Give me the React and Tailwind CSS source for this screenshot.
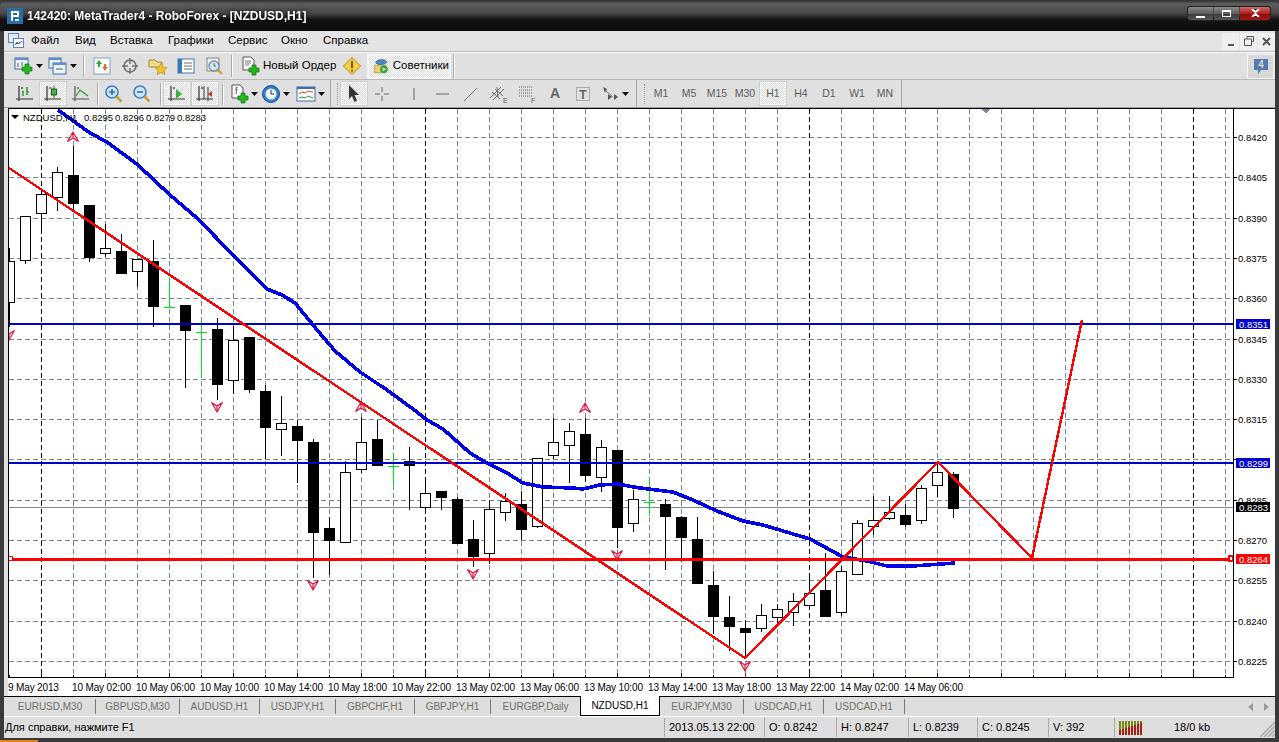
import React from "react";

const FONT = "'Liberation Sans', Arial, sans-serif";

// x = 9 + 16 * index; [wickTop, wickBottom, bodyTop, bodyBottom, kind]
const CANDLES = [
  [248, 327, 261, 302, "w"], [216, 264, 216, 260, "w"], [194, 233, 194, 213, "w"], [167, 211, 172, 197, "w"],
  [146, 212, 175, 203, "b"], [205, 262, 205, 257, "b"], [224, 257, 248, 253, "w"], [234, 273, 251, 273, "b"],
  [259, 287, 259, 271, "w"], [240, 327, 261, 306, "b"], [277, 307, 307, 307, "g"], [305, 388, 305, 330, "b"],
  [320, 378, 332, 332, "g"], [318, 400, 329, 384, "b"], [326, 394, 340, 380, "w"], [337, 393, 337, 389, "b"],
  [385, 459, 391, 427, "b"], [396, 456, 423, 429, "w"], [420, 483, 426, 440, "b"], [439, 578, 442, 532, "b"],
  [517, 575, 528, 540, "b"], [461, 542, 472, 542, "w"], [417, 473, 442, 469, "w"], [420, 465, 439, 465, "b"],
  [453, 486, 466, 466, "g"], [447, 510, 461, 465, "b"], [480, 510, 493, 507, "w"], [491, 510, 491, 497, "b"],
  [497, 543, 499, 543, "b"], [520, 567, 539, 556, "b"], [500, 564, 509, 553, "w"], [493, 521, 501, 512, "w"],
  [491, 540, 504, 529, "b"], [458, 528, 458, 526, "w"], [418, 459, 442, 455, "w"], [423, 483, 431, 445, "w"],
  [418, 482, 434, 475, "b"], [440, 492, 447, 477, "w"], [450, 548, 450, 527, "b"], [490, 532, 499, 523, "w"],
  [477, 516, 502, 502, "g"], [499, 570, 504, 516, "b"], [516, 562, 517, 537, "b"], [517, 583, 539, 583, "b"],
  [571, 634, 585, 616, "b"], [596, 651, 617, 626, "b"], [620, 658, 628, 632, "b"], [604, 632, 615, 628, "w"],
  [604, 627, 609, 617, "w"], [593, 626, 601, 612, "w"], [577, 610, 593, 605, "w"], [553, 616, 590, 616, "b"],
  [566, 616, 571, 612, "w"], [520, 575, 523, 574, "w"], [496, 535, 520, 526, "w"], [496, 520, 512, 518, "w"],
  [504, 527, 515, 524, "b"], [485, 524, 488, 520, "w"], [463, 497, 472, 485, "w"], [472, 518, 474, 508, "b"],
];

const MA = "58,110 90,133 107,142 138,165 170,195 197,218 233,255 267,289 282,295 295,303 318,331 335,351 360,372 387,390 417,412 427,420 443,429 470,453 487,463 507,473 523,483 543,487 573,488 583,489 600,485 617,484 640,488 673,492 693,500 717,511 743,521 763,525 810,539 843,557 867,561 887,566 913,566 955,563";

const PRICES = ["0.8420", "0.8405", "0.8390", "0.8375", "0.8360", "0.8345", "0.8330", "0.8315", null, "0.8285", "0.8270", "0.8255", "0.8240", "0.8225"];
const priceY = (i) => Math.round(137 + i * 40.31);

const TIMES = ["10 May 02:00", "10 May 06:00", "10 May 10:00", "10 May 14:00", "10 May 18:00", "10 May 22:00", "13 May 02:00", "13 May 06:00", "13 May 10:00", "13 May 14:00", "13 May 18:00", "13 May 22:00", "14 May 02:00", "14 May 06:00"];

const UP_MARKS = [[73, 137], [361, 407], [585, 408]];
const DOWN_MARKS = [[9, 335], [217, 407], [313, 585], [473, 574], [617, 555], [745, 666]];

const TABS = [
  ["EURUSD,M30", 91], ["GBPUSD,M30", 84], ["AUDUSD,H1", 80], ["USDJPY,H1", 76], ["GBPCHF,H1", 79], ["GBPJPY,H1", 76], ["EURGBP,Daily", 89],
];

const Sep = ({ className = "ml-[2px] mr-[1px]" }) => (
  <div className={`w-[2px] h-[22px] border-l border-[#a8a8a8] border-r-white border-r shrink-0 ${className}`} />
);

const Btn = ({ w = 28, active, className = "", children }) => (
  <div
    style={{ width: w }}
    className={`h-[25px] shrink-0 flex items-center justify-center ${className} ${
      active ? "border-2 border-[#f4f4f4] outline outline-1 outline-[#cfcfcf] -outline-offset-1 bg-[repeating-conic-gradient(#ffffff_0_25%,#d8d8d8_0_50%)] bg-[length:2px_2px]" : ""
    }`}
  >
    {children}
  </div>
);

const Caret = () => <svg width="7" height="4" viewBox="0 0 7 4" className="ml-[2px]"><path d="M0 0h7L3.5 4z" fill="#111" /></svg>;

const Ico = ({ children, size = 20 }) => (
  <svg width={size} height={size} viewBox="0 0 20 20" fill="none">{children}</svg>
);

const Plus = ({ x = 10, y = 10 }) => (
  <path transform={`translate(${x} ${y})`} d="M3 0h4v3h3v4H7v3H3V7H0V3h3z" fill="#25b51f" stroke="#0f6f14" strokeWidth=".7" />
);

const Win = ({ x = 1, y = 3, w = 14, h = 11 }) => (
  <>
    <rect x={x} y={y} width={w} height={h} fill="#eef4fb" stroke="#3f6fa8" />
    <rect x={x} y={y} width={w} height="2" fill="#5f8fc6" />
  </>
);

const Axes = ({ c = "#333" }) => <path d="M4 2v15M1 15h17M7 3v2" stroke={c} strokeWidth="1.2" />;

const Lens = ({ sign }) => (
  <Ico>
    <circle cx="8" cy="8" r="6" fill="#cfe6f8" stroke="#3a7fc0" strokeWidth="1.6" />
    <path d="M12.5 12.5l5 5" stroke="#c9a23a" strokeWidth="2.6" />
    <path d={sign === "+" ? "M5 8h6M8 5v6" : "M5 8h6"} stroke="#2a6fb0" strokeWidth="1.6" />
  </Ico>
);

const IconText = ({ t, sub }) => (
  <Ico>
    <text x="10" y="14" textAnchor="middle" fontFamily={FONT} fontWeight="700" fontSize="14" fill="#666">{t}</text>
    {sub}
  </Ico>
);

const TitleBar = () => (
  <div className="h-[31px] shrink-0 flex items-center rounded-t-[6px] bg-[linear-gradient(180deg,#2e2e2e_0,#5c5c5c_12%,#4a4a4a_40%,#333333_52%,#141414_62%,#0d0d0d_100%)]">
    <svg width="16" height="16" viewBox="0 0 16 16" className="ml-[7px] mr-[4px]">
      <rect width="16" height="16" fill="#2b6ca8" />
      <path d="M4 3h8v6H6v4H4zM6 5v2h4V5z" fill="#fff" />
      <path d="M8 11h4v2H8z" fill="#cfe3f5" />
    </svg>
    <span className="text-[12px] font-bold text-white drop-shadow-[0_0_2px_#000]" style={{ fontFamily: FONT }}>
      142420: MetaTrader4 - RoboForex - [NZDUSD,H1]
    </span>
    <div className="ml-auto mr-[9px] mb-[5px] flex h-[13px] gap-px outline outline-1 outline-[#222] rounded-[2px]">
      <div className="w-[25px] flex items-end justify-center pb-[2px] bg-[linear-gradient(180deg,#8a8a8a,#5e5e5e_50%,#3c3c3c_55%,#555)] rounded-l-[2px]">
        <div className="w-[9px] h-[2px] bg-white" />
      </div>
      <div className="w-[25px] flex items-center justify-center bg-[linear-gradient(180deg,#8a8a8a,#5e5e5e_50%,#3c3c3c_55%,#555)]">
        <div className="w-[9px] h-[7px] border border-t-2 border-white" />
      </div>
      <div className="w-[30px] flex items-center justify-center bg-[linear-gradient(180deg,#d06a6a,#b02020_50%,#8c0c0c_55%,#a81818)] rounded-r-[2px]">
        <svg width="9" height="8" viewBox="0 0 9 8"><path d="M1 0l3.5 3L8 0M1 8l3.5-3L8 8" stroke="#fff" strokeWidth="2" /></svg>
      </div>
    </div>
  </div>
);

const MENU = [["Файл", 44], ["Вид", 35], ["Вставка", 58], ["Графики", 60], ["Сервис", 53], ["Окно", 42], ["Справка", 60]];

const MenuBar = () => (
  <div className="h-[21px] shrink-0 flex items-center bg-[#e4e4e4] border-b border-[#bdbdbd]">
    <div className="w-[27px] pl-[4px] flex items-center">
      <svg width="16" height="16" viewBox="0 0 16 16">
        <rect x=".5" y=".5" width="10" height="9" fill="#dfeafa" stroke="#5b7fc0" />
        <rect x="5.5" y="5.5" width="10" height="9" fill="#fff" stroke="#5b7fc0" />
        <path d="M7 12l2-3 2 2 3-3" stroke="#4a7ac0" />
      </svg>
    </div>
    {MENU.map(([label, w]) => (
      <span key={label} style={{ width: w }} className="text-[11.5px] text-black shrink-0">{label}</span>
    ))}
    <div className="ml-auto flex gap-px items-center">
      <div className="w-[17px] h-[17px] bg-[#efefef] flex items-end justify-center pb-[4px]"><div className="w-[6px] h-[2px] bg-[#555]" /></div>
      <div className="w-[17px] h-[17px] bg-[#efefef] flex items-center justify-center">
        <svg width="10" height="10" viewBox="0 0 10 10" fill="none"><path d="M3 2.5V.5h6.5v5H7.5M.5 3h7v6.5h-7z" stroke="#555" /></svg>
      </div>
      <div className="w-[17px] h-[17px] bg-[#efefef] flex items-center justify-center">
        <svg width="9" height="9" viewBox="0 0 9 9"><path d="M1 1l7 7M8 1L1 8" stroke="#555" strokeWidth="2" /></svg>
      </div>
    </div>
  </div>
);

const ToolbarTop = () => (
  <div className="h-[28px] shrink-0 flex items-center bg-[#e0e0e0] border-t border-white border-b border-b-[#b8b8b8] pl-[8px]">
    <Btn w={32}>
      <Ico><Win x={1} y={2} w={13} h={11} /><path d="M4 7v4M8 6v4" stroke="#555" /><Plus x={8} y={8} /></Ico><Caret />
    </Btn>
    <Btn w={35} className="ml-[1px]">
      <Ico><Win x={1} y={2} w={12} h={10} /><Win x={5} y={7} w={13} h={11} /><path d="M8 13h7" stroke="#555" /></Ico><Caret />
    </Btn>
    <Sep className="mx-[3px]" />
    <Btn>
      <Ico>
        <rect x="2" y="2" width="16" height="16" fill="#fff" stroke="#7aa0c8" />
        <path d="M7 4l3 4H8v3H6V8H4z" fill="#2fa52f" />
        <path d="M13 15l-3-4h2V8h2v3h2z" fill="#e0702a" />
      </Ico>
    </Btn>
    <Btn>
      <Ico>
        <circle cx="10" cy="10" r="6" stroke="#6e6e6e" strokeWidth="1.6" />
        <path d="M10 2v6M10 12v6M2 10h6M12 10h6" stroke="#6e6e6e" strokeWidth="1.4" />
      </Ico>
    </Btn>
    <Btn>
      <Ico>
        <path d="M1 4h6l2 2h5v5H1z" fill="#f0d98a" stroke="#a88a30" />
        <path d="M13 7l2 4 4 .5-3 3 .8 4-3.8-2-3.8 2 .8-4-3-3 4-.5z" fill="#f2c230" stroke="#b88a10" strokeWidth=".7" />
      </Ico>
    </Btn>
    <Btn>
      <Ico>
        <rect x="2" y="3" width="16" height="14" fill="#fff" stroke="#3c78b8" />
        <rect x="2" y="3" width="4" height="14" fill="#3c78b8" />
        <path d="M8 7h8M8 10h8M8 13h8" stroke="#6a6a6a" />
      </Ico>
    </Btn>
    <Btn>
      <Ico>
        <rect x="3" y="2" width="12" height="13" fill="#eee" stroke="#888" />
        <circle cx="10" cy="10" r="5" fill="#d6e8f7" stroke="#7a8ea8" strokeWidth="1.4" />
        <path d="M10 7v3h2" stroke="#7a5a5a" />
        <path d="M14 14l4 4" stroke="#c9a23a" strokeWidth="2.4" />
      </Ico>
    </Btn>
    <Sep className="mx-[3px]" />
    <div className="flex items-center h-[25px] w-[102px] shrink-0 pl-[4px]">
      <Ico>
        <path d="M3 1h8l3 3v10H3z" fill="#fff" stroke="#555" />
        <path d="M5 5h6M5 7h6M5 9h4" stroke="#777" />
        <Plus x={9} y={9} />
      </Ico>
      <span className="ml-[3px] text-[11.5px] text-black whitespace-nowrap">Новый Ордер</span>
    </div>
    <Btn>
      <Ico>
        <path d="M10 1.5l8.5 8.5-8.5 8.5L1.5 10z" fill="#f6cf45" stroke="#b08a18" strokeLinejoin="round" />
        <path d="M10 5v7M10 13.5v2" stroke="#6b4a08" strokeWidth="1.8" />
      </Ico>
    </Btn>
    <div className="ml-px h-[25px] w-[84px] shrink-0 flex items-center pl-[4px] border-2 border-[#f4f4f4] bg-[repeating-conic-gradient(#ffffff_0_25%,#dcdcdc_0_50%)] bg-[length:2px_2px]">
      <Ico>
        <path d="M2 9h13v9H2z" fill="#edd27a" stroke="#b39a3a" />
        <path d="M3 6c1-4 10-5 12-2l2 1-2 2c-4 2-9 2-12-1z" fill="#4a86c8" stroke="#2b5d95" strokeWidth=".7" />
        <circle cx="13" cy="14" r="4.5" fill="#2fa52f" />
        <path d="M11.5 11.8l4 2.2-4 2.2z" fill="#fff" />
      </Ico>
      <span className="ml-[3px] text-[11.5px] text-black">Советники</span>
    </div>
    <div className="w-[2px] h-[26px] ml-[2px] border-l border-[#b0b0b0] border-r border-r-white" />
    <div className="ml-auto mr-px w-[27px] h-[25px] border border-[#f4f4f4] bg-[#d8d8d8] flex items-center justify-center">
      <svg width="16" height="17" viewBox="0 0 16 17">
        <path d="M1 1h14v11H8l-3 4v-4H1z" fill="#5878b0" />
        <text x="8" y="10" textAnchor="middle" fontFamily={FONT} fontSize="10" fill="#fff">4</text>
      </svg>
    </div>
  </div>
);

const ToolbarBottom = () => (
  <div className="h-[28px] shrink-0 flex bg-[#e0e0e0] border-b border-[#a0a0a0]">
    <div className="w-[327px] flex items-center pl-[7px] border-r border-[#a8a8a8]">
      <Btn>
        <Ico><Axes /><path d="M8 7v5M12 3v8" stroke="#1c9a1c" strokeWidth="1.4" /><path d="M7 7h1M12 8h2" stroke="#1c9a1c" /></Ico>
      </Btn>
      <Btn active>
        <Ico><Axes /><path d="M11 2v12" stroke="#1c7a1c" /><rect x="8.5" y="5" width="5" height="6" fill="#35c035" stroke="#111" strokeWidth=".7" /></Ico>
      </Btn>
      <Btn>
        <Ico><Axes c="#555" /><path d="M5 12l4-6 4 3 4 3" stroke="#2f9a2f" strokeWidth="1.2" /></Ico>
      </Btn>
      <Sep />
      <Btn><Lens sign="+" /></Btn>
      <Btn><Lens sign="-" /></Btn>
      <Sep className="ml-[4px] mr-[1px]" />
      <Btn active>
        <Ico><Axes /><path d="M9 5l6 5-6 5z" fill="#37b437" /></Ico>
      </Btn>
      <Btn active>
        <Ico><Axes /><path d="M9 2v13" stroke="#333" /><path d="M13 10l4-3v6z" fill="#d03018" /><path d="M13 3v14" stroke="#333" /></Ico>
      </Btn>
      <Sep className="ml-[3px] mr-[3px]" />
      <Btn w={32}>
        <Ico>
          <path d="M3 1h8l3 3v10H3z" fill="#fff" stroke="#555" />
          <text x="6" y="10" fontFamily={FONT} fontSize="9" fill="#333">f</text>
          <Plus x={9} y={9} />
        </Ico>
        <Caret />
      </Btn>
      <Btn w={31} className="ml-px">
        <Ico>
          <circle cx="10" cy="10" r="8.5" fill="#2f7fd0" stroke="#1b4f8a" />
          <circle cx="10" cy="10" r="5.5" fill="#f4f8fc" />
          <path d="M10 6v4h3" stroke="#333" />
        </Ico>
        <Caret />
      </Btn>
      <Btn w={35} className="ml-[2px]">
        <Ico>
          <rect x="1" y="3" width="18" height="14" fill="#fff" stroke="#3c6ea8" />
          <rect x="1" y="3" width="18" height="2" fill="#3c6ea8" />
          <path d="M3 10l3-2 3 1 3-2 5 1" stroke="#d04a2a" />
          <path d="M3 14l3-1 3 1 3-2 5 2" stroke="#2f9a2f" />
        </Ico>
        <Caret />
      </Btn>
    </div>
    <div className="w-[303px] ml-[3px] flex items-center pl-[3px] border-r border-[#a8a8a8]">
      <div className="w-[2px] h-[22px] border-l border-dotted border-[#999] mr-[1px]" />
      <Btn active>
        <svg width="12" height="17" viewBox="0 0 12 17"><path d="M1 0l10 10H6.5L9 15.5 6.5 17 4 11l-3 3z" fill="#333" /></svg>
      </Btn>
      <Btn>
        <Ico><path d="M10 3v5M10 12v5M3 10h5M12 10h5" stroke="#666" /></Ico>
      </Btn>
      <Btn className="ml-[4px]"><Ico><path d="M10 4v12" stroke="#666" /></Ico></Btn>
      <Btn className="ml-px"><Ico><path d="M3 10h13" stroke="#666" /></Ico></Btn>
      <Btn><Ico><path d="M3 17L16 4" stroke="#777" /></Ico></Btn>
      <Btn>
        <Ico>
          <path d="M1 14L12 3M4 16L15 5M3 8l8 7M6 5l8 7M8 3l1 10" stroke="#666" strokeWidth=".9" />
          <text x="14" y="19" fontFamily={FONT} fontSize="7" fill="#555">E</text>
        </Ico>
      </Btn>
      <Btn>
        <Ico>
          <path d="M2 3h14M2 6h14M2 9h14M2 12h14" stroke="#666" strokeDasharray="1 1" />
          <text x="14" y="19" fontFamily={FONT} fontSize="7" fill="#555">F</text>
        </Ico>
      </Btn>
      <Btn><IconText t="A" /></Btn>
      <Btn>
        <Ico>
          <rect x="3.5" y="3.5" width="13" height="13" stroke="#777" strokeDasharray="1 1" />
          <text x="10" y="15" textAnchor="middle" fontFamily={FONT} fontWeight="700" fontSize="12" fill="#666">T</text>
        </Ico>
      </Btn>
      <Btn w={34}>
        <Ico>
          <path d="M3 3l4 2-2 4zM8 10l4 3-4 3zM14 10l4 3-4 3z" fill="#555" />
          <path d="M6 7l7 6" stroke="#777" />
        </Ico>
        <Caret />
      </Btn>
    </div>
    <div className="w-[262px] ml-[3px] flex items-center pl-[4px] border-r border-[#a8a8a8]">
      <div className="w-[3px] h-[20px] border-l border-dotted border-[#999]" />
      {["M1", "M5", "M15", "M30", "H1", "H4", "D1", "W1", "MN"].map((p) => (
        <Btn key={p} active={p === "H1"}>
          <span className="text-[10.5px] text-[#5c5c5c]">{p}</span>
        </Btn>
      ))}
    </div>
  </div>
);

const Chart = () => (
  <div className="h-[588px] shrink-0 pl-[4px] bg-[#dedede]">
    <svg width="1267" height="588" viewBox="8 108 1267 588" className="block bg-white" fontFamily={FONT}>
      <g shapeRendering="crispEdges">
        {/* grid */}
        {PRICES.map((_, i) => (
          <line key={i} x1="9" x2="1233" y1={priceY(i) + 0.5} y2={priceY(i) + 0.5} stroke="#778899" strokeDasharray="5 3" />
        ))}
        {Array.from({ length: 38 }, (_, i) => 41 + i * 32).map((x) => (
          <line
            key={x}
            x1={x + 0.5}
            x2={x + 0.5}
            y1="109"
            y2="677"
            stroke={[41, 425, 809, 1193].includes(x) ? "#000" : "#778899"}
            strokeDasharray="5 3"
          />
        ))}
        <line x1="9" x2="1233" y1="507.5" y2="507.5" stroke="#778899" />

        {/* candles */}
        {CANDLES.map(([wt, wb, bt, bb, kind], i) => {
          const x = 9 + i * 16;
          if (kind === "g") {
            return (
              <g key={i} stroke="#00e020">
                <line x1={x + 0.5} x2={x + 0.5} y1={wt} y2={wb} />
                <line x1={x - 5} x2={x + 6} y1={bt + 0.5} y2={bt + 0.5} />
              </g>
            );
          }
          return (
            <g key={i}>
              <line x1={x + 0.5} x2={x + 0.5} y1={wt} y2={wb} stroke="#000" />
              <rect x={x - 4.5} y={bt + 0.5} width="10" height={bb - bt} fill={kind === "b" ? "#000" : "#fff"} stroke="#000" />
            </g>
          );
        })}

        {/* objects */}
        <polyline points={MA} fill="none" stroke="#0000e6" strokeWidth="3.6" />
        <rect x="9" y="323" width="1224" height="2" fill="#0000cd" />
        <rect x="9" y="462" width="1224" height="2" fill="#0000cd" />
        <rect x="9" y="558" width="1224" height="2.6" fill="#ff0000" />
        <polyline points="9,168 745,658 938,462 1032,558 1082,320" fill="none" stroke="#ff0000" strokeWidth="2.4" />
        <rect x="8.5" y="556.5" width="4" height="4" fill="#fff" stroke="#ff0000" />
        <rect x="1228" y="555" width="6" height="7" fill="#ff0000" />
        <rect x="1230" y="557" width="2" height="3" fill="#fff" />
        <path d="M981 108h10l-5 6z" fill="#778899" />
      </g>

      {/* fractal marks */}
      {UP_MARKS.map(([x, y]) => (
        <path key={`u${x}`} d={`M${x - 5.5} ${y + 4.5}L${x} ${y - 5}L${x + 5.5} ${y + 4.5}L${x} ${y + 1}Z M${x} ${y - 5}V${y + 1}`} fill="#fbd5de" stroke="#dc143c" strokeWidth="1.1" />
      ))}
      {DOWN_MARKS.map(([x, y]) => (
        <path key={`d${x}`} d={`M${x - 5.5} ${y - 4.5}L${x} ${y + 5}L${x + 5.5} ${y - 4.5}L${x} ${y - 1}Z M${x} ${y + 5}V${y - 1}`} fill="#fbd5de" stroke="#dc143c" strokeWidth="1.1" />
      ))}

      {/* axes */}
      <g shapeRendering="crispEdges" stroke="#000">
        <line x1="8" x2="1275" y1="108.5" y2="108.5" />
        <line x1="8.5" x2="8.5" y1="108" y2="678" />
        <line x1="1233.5" x2="1233.5" y1="108" y2="678" />
        <line x1="8" x2="1234" y1="677.5" y2="677.5" />
        {PRICES.map((_, i) => (
          <line key={i} x1="1234" x2="1237" y1={priceY(i) + 0.5} y2={priceY(i) + 0.5} />
        ))}
        {Array.from({ length: 39 }, (_, i) => 9 + i * 32).map((x, i) => (
          <line key={x} x1={x + 0.5} x2={x + 0.5} y1={i % 2 === 0 ? 675 : 673} y2="677" stroke={x === 745 ? "#f00" : "#000"} />
        ))}
      </g>

      {/* labels */}
      <g fontSize="9.5" fill="#000">
        {PRICES.map((p, i) => p && (
          <text key={p} x="1238" y={priceY(i) + 4}>{p}</text>
        ))}
        <path d="M11 115h8l-4 4z" fill="#000" />
        <text x="23" y="121">NZDUSD,H1</text>
        <text x="84" y="121">0.8295</text>
        <text x="115" y="121">0.8296</text>
        <text x="146" y="121">0.8279</text>
        <text x="177" y="121">0.8283</text>
      </g>
      <g fontSize="10" letterSpacing="-0.15" fill="#000">
        <text x="8" y="691">9 May 2013</text>
        {TIMES.map((t, i) => (
          <text key={t} x={72 + i * 64} y="691">{t}</text>
        ))}
      </g>
      {[["0.8351", 319, "#0000cd"], ["0.8299", 458, "#0000cd"], ["0.8283", 502, "#000"], ["0.8264", 554, "#ff0000"]].map(([p, y, bg]) => (
        <g key={p}>
          <rect x="1236" y={y} width="34" height="10" fill={bg} shapeRendering="crispEdges" />
          <text x="1239" y={y + 9} fontSize="9.5" fill="#fff">{p}</text>
        </g>
      ))}
    </svg>
  </div>
);

const TabStrip = () => (
  <div className="h-[21px] shrink-0 flex items-stretch bg-[#dedede] border-t border-t-black border-b border-b-white text-[10px] text-[#6f6f64]">
    <div className="w-[1px] shrink-0" />
    {TABS.map(([t, w], i) => (
      <div
        key={t}
        style={{ width: w }}
        className={`shrink-0 flex items-center justify-center my-[2px] ${i < TABS.length - 1 ? "border-r border-[#7a7a70]" : ""}`}
      >
        {t}
      </div>
    ))}
    <div className="w-[80px] shrink-0 -mt-px bg-white border-x border-b border-black flex items-center justify-center text-black">NZDUSD,H1</div>
    {[["EURJPY,M30", 84], ["USDCAD,H1", 80], ["USDCAD,H1", 81]].map(([t, w], i) => (
      <div key={i} style={{ width: w }} className="shrink-0 flex items-center justify-center my-[2px] border-r border-[#7a7a70]">{t}</div>
    ))}
    <div className="ml-auto mr-[5px] flex items-center gap-[10px]">
      <svg width="6" height="8" viewBox="0 0 6 8"><path d="M5 0v8L0 4z" fill="#9a9a9a" /></svg>
      <svg width="6" height="8" viewBox="0 0 6 8"><path d="M0 0v8l5-4z" fill="#9a9a9a" /></svg>
    </div>
  </div>
);

const STATUS = [["2013.05.13 22:00", 100], ["O: 0.8242", 72], ["H: 0.8247", 72], ["L: 0.8239", 69], ["C: 0.8245", 71], ["V: 392", 66]];

const StatusBar = () => (
  <div className="h-[21px] shrink-0 flex items-center bg-[#dedede] text-[11px] text-black">
    <div className="w-[660px] pl-[1px] shrink-0">Для справки, нажмите F1</div>
    {STATUS.map(([t, w]) => (
      <div key={t} style={{ width: w }} className="h-[19px] shrink-0 flex items-center pl-[4px] border-l border-[#a8a8a8]">{t}</div>
    ))}
    <div className="h-[19px] flex-1 flex items-center pl-[4px] border-l border-[#a8a8a8] relative">
      <svg width="24" height="14" viewBox="0 0 24 14" shapeRendering="crispEdges">
        {[0, 3, 6, 9, 12, 15, 18, 21].map((x, i) => (
          <g key={x}>
            <rect x={x} width="2" y="0" height={9 - i} fill="#6f8a10" />
            <rect x={x} width="2" y={9 - i} height={5 + i} fill="#a81c10" />
          </g>
        ))}
      </svg>
      <span className="ml-[31px]">18/0 kb</span>
      <svg width="15" height="15" viewBox="0 0 15 15" className="absolute right-0 bottom-0">
        <path d="M15 0L0 15M15 4L4 15M15 8L8 15M15 12L12 15" stroke="#a8a8a8" strokeWidth="1.4" />
      </svg>
    </div>
  </div>
);

const App = () => (
  <div className="w-[1279px] h-[742px] overflow-hidden flex flex-col bg-[#3a3a3a]" style={{ fontFamily: FONT }}>
    <TitleBar />
    <div className="ml-[4px] mr-[4px] flex flex-col">
      <MenuBar />
      <ToolbarTop />
      <ToolbarBottom />
      <Chart />
      <TabStrip />
      <StatusBar />
    </div>
    <div className="flex-1 flex items-end">
      <div className="w-[38px] h-[2px] bg-[#e8801a]" />
    </div>
  </div>
);

export default App;
